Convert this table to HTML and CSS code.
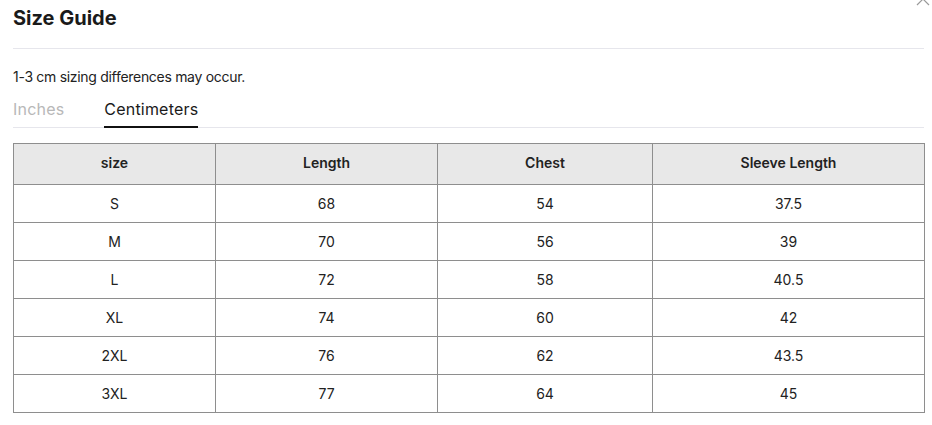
FILE: index.html
```html
<!DOCTYPE html>
<html>
<head>
<meta charset="utf-8">
<link rel="stylesheet" href="styles.css">
</head>
<body>
<div class="modal">
  <button class="close" aria-label="Close">
    <svg width="14" height="14" viewBox="0 0 14 14"><path d="M1 1L13 13M13 1L1 13" stroke="#9a9a9a" stroke-width="1.2" fill="none"/></svg>
  </button>
  <div class="header"><h2 class="title">Size Guide</h2></div>
  <p class="note">1-3 cm sizing differences may occur.</p>
  <div class="tabs">
    <span class="tab">Inches</span>
    <span class="tab active">Centimeters</span>
  </div>
  <table class="sizes">
    <colgroup><col class="c1"><col class="c2"><col class="c3"><col class="c4"></colgroup>
    <thead>
      <tr><th>size</th><th>Length</th><th>Chest</th><th>Sleeve Length</th></tr>
    </thead>
    <tbody>
      <tr><td>S</td><td>68</td><td>54</td><td>37.5</td></tr>
      <tr><td>M</td><td>70</td><td>56</td><td>39</td></tr>
      <tr><td>L</td><td>72</td><td>58</td><td>40.5</td></tr>
      <tr><td>XL</td><td>74</td><td>60</td><td>42</td></tr>
      <tr><td>2XL</td><td>76</td><td>62</td><td>43.5</td></tr>
      <tr><td>3XL</td><td>77</td><td>64</td><td>45</td></tr>
    </tbody>
  </table>
</div>
</body>
</html>
```
FILE: styles.css
```css
html, body { margin: 0; padding: 0; background: #fff; }
body { font-family: Inter, "Noto Sans", sans-serif; color: #222; }
.modal { position: relative; padding: 0 8px 0 13px; }
.close { position: absolute; top: -8px; right: 2px; background: none; border: 0; padding: 0; width: 14px; height: 14px; }
.close svg { display: block; }
.header { padding: 6px 0 18px; border-bottom: 1px solid #e6e6ec; }
.title { margin: 0; font-size: 20px; line-height: 24px; font-weight: 700; color: #1a1a1a; letter-spacing: 0; }
.note { margin: 18px 0 0; font-size: 14px; line-height: 20px; color: #222; letter-spacing: -0.3px; }
.tabs { display: flex; gap: 40px; margin-top: 11px; border-bottom: 1px solid #e6e6ec; }
.tab { font-size: 16px; line-height: 22px; padding-bottom: 6px; color: #b8b8b8; border-bottom: 2px solid transparent; margin-bottom: -1px; letter-spacing: 0.2px; }
.tab.active { color: #1a1a1a; border-bottom-color: #111; }
.sizes { margin-top: 15px; width: 911px; border-collapse: collapse; table-layout: fixed; font-size: 14px; }
.c1 { width: 202px; } .c2 { width: 222px; } .c3 { width: 215px; } .c4 { width: 272px; }
.sizes th, .sizes td { border: 1px solid #8e8e8e; text-align: center; padding: 0; }
.sizes th { background: #e8e8e8; height: 41px; padding-bottom: 3px; box-sizing: border-box; font-weight: 600; color: #222; }
.sizes td { height: 37px; color: #222; }
```
